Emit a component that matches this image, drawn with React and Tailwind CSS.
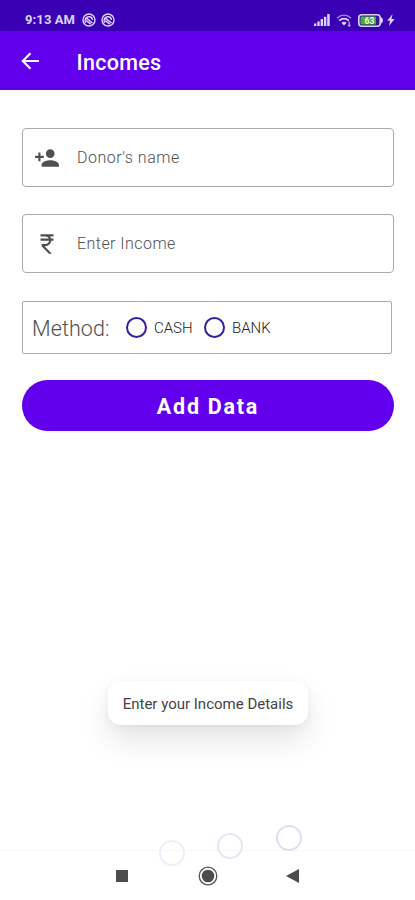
function StatusBar() {
  return (
    <div className="flex h-[31px] items-center justify-between bg-[#3900b4] pt-[9px] pr-[20px] pl-[25px] text-[#ddd2ff]">
      <div className="flex items-center">
        <span className="w-[52px] text-[13px] leading-[14px] font-bold tracking-[0.1px] whitespace-nowrap">9:13 AM</span>
        <Swirl className="ml-[5px]" />
        <Swirl className="ml-[5px]" />
      </div>
      <div className="flex items-center">
        <svg width="16" height="12" viewBox="0 0 16 12" fill="currentColor">
          <path d="M0 9.5h2.4V12H0zM3.3 7.5h2.4V12H3.3zM6.6 5h2.4v7H6.6zM9.9 2.8h2.4V12H9.9zM13.2 0h2.5v12h-2.5z" />
        </svg>
        <svg className="ml-[6px]" width="17" height="14" viewBox="0 0 17 14" fill="none" stroke="currentColor">
          <path d="M1 5.2c4-4 10-4 14 0" strokeWidth="1.3" opacity=".65" />
          <path d="M3.3 7.7c2.8-2.8 6.7-2.8 9.5 0" strokeWidth="1.7" />
          <path d="M5.4 9.8c1.7-1.5 3.6-1.5 5.2 0L8 12.6z" fill="currentColor" stroke="none" />
          <path d="M13.2 8.5v4.8M11.8 12l1.4 1.3 1.4-1.3" strokeWidth="1" />
        </svg>
        <svg className="ml-[5px]" width="26" height="13" viewBox="0 0 26 13">
          <rect x=".8" y=".8" width="21.4" height="11.4" rx="3" fill="#37169a" stroke="#ddd2ff" strokeWidth="1.6" />
          <rect x="2.5" y="2.5" width="15.5" height="8" rx="1" fill="#48ad35" />
          <path d="M23 3.3c2.6 1.2 2.6 5.2 0 6.4z" fill="#ddd2ff" />
          <text x="11.5" y="9.6" textAnchor="middle" fontSize="8.5" fontWeight="700" fill="#edffe7">63</text>
        </svg>
        <svg className="ml-[3px]" width="8" height="12" viewBox="0 0 8 12" fill="currentColor">
          <path d="M5.6 0 .3 6.7h2.8L2 12l5.6-7H4.5z" />
        </svg>
      </div>
    </div>
  );
}

function Swirl({ className }) {
  return (
    <svg className={className} width="14" height="14" viewBox="0 0 14 14" fill="none" stroke="currentColor" strokeWidth="1.4">
      <circle cx="7" cy="7" r="6" />
      <path d="M3.4 9.9C2.2 6.3 4.1 3.8 7 3.8c2 0 3.4 1.3 3.4 3.3M3.7 4.6l6.8 5.4M4.2 7.6l4.7 3.5" />
    </svg>
  );
}

function Field({ icon, className, label, labelClass }) {
  return (
    <div className={`flex h-[59px] w-[372px] items-center rounded-[4px] border border-[#aaa] ${className}`}>
      <div className="flex w-[54px] shrink-0 items-center pl-[11px]">{icon}</div>
      <span className={`text-[16px] leading-[20px] font-light whitespace-nowrap text-[#505050] ${labelClass}`}>{label}</span>
    </div>
  );
}

function Radio({ label, className, labelClass }) {
  return (
    <label className={`flex items-center ${className}`}>
      <span className="size-[21px] shrink-0 rounded-full border-2 border-[#3a1ba5]" />
      <span className={`mt-[1px] ml-[7px] text-[15px] leading-[20px] font-light text-[#222] ${labelClass}`}>{label}</span>
    </label>
  );
}

export default function App() {
  return (
    <div className="relative flex h-[900px] w-[415px] flex-col overflow-hidden bg-white font-[Roboto,sans-serif]">
      <StatusBar />
      <header className="flex h-[59px] items-center bg-[#6200ee] pl-[21px] text-white">
        <svg width="19" height="18" viewBox="0 0 19 18" fill="none" stroke="currentColor" strokeWidth="2.1">
          <path d="M18 9H2M9.5 1.2 1.8 9l7.7 7.8" />
        </svg>
        <h1 className="mt-[4px] ml-[36.5px] text-[21.5px] leading-[26px] font-medium tracking-[0.3px]">Incomes</h1>
      </header>
      <main className="flex flex-1 flex-col pt-[38px] pl-[22px]">
        <Field
          label="Donor's name"
          labelClass="tracking-[0.5px]"
          icon={
            <svg width="26" height="26" viewBox="0 0 24 24" fill="#505050">
              <path d="M15 12c2.21 0 4-1.79 4-4s-1.79-4-4-4-4 1.79-4 4 1.79 4 4 4zm-9-2V7H4v3H1v2h3v3h2v-3h3v-2H6zm9 4c-2.67 0-8 1.34-8 4v2h16v-2c0-2.66-5.33-4-8-4z" />
            </svg>
          }
        />
        <Field
          className="mt-[27px]"
          label="Enter Income"
          labelClass="tracking-[0.45px]"
          icon={
            <svg width="26" height="26" viewBox="0 0 24 24" fill="#505050">
              <path d="M13.66 7c-.56-1.18-1.76-2-3.16-2H6V3h12v2h-3.26c.48.58.84 1.26 1.05 2H18v2h-2.02c-.25 2.8-2.61 5-5.48 5h-.73l6.73 7h-2.77L7 14v-2h3.5c1.76 0 3.22-1.3 3.46-3H6V7h7.66z" />
            </svg>
          }
        />
        <div className="mt-[28px] flex h-[53px] w-[370px] items-center rounded-[2px] border border-[#aaa] pl-[9px]">
          <span className="mt-[2px] w-[94px] text-[21.5px] leading-[26px] font-light tracking-[0.1px] text-[#505050]">Method:</span>
          <Radio label="CASH" className="w-[78px]" />
          <Radio label="BANK" />
        </div>
        <button className="mt-[26px] h-[51px] w-[372px] rounded-full bg-[#6200ee] pt-[4px] text-[21.5px] font-bold tracking-[1.75px] text-white">Add Data</button>
        <div className="mt-[250px] ml-[86px] flex h-[44px] w-[200px] items-center justify-center rounded-[13px] bg-white pt-[2px] text-[15px] whitespace-nowrap text-[#444] shadow-[0_15px_30px_rgba(0,0,0,0.11),0_2px_10px_rgba(0,0,0,0.05)]">
          Enter your Income Details
        </div>
      </main>
      <nav className="flex h-[50px] items-center border-t border-[#f7f7f7] pl-[116px]">
        <span className="size-[12px] bg-[#4c4c4c]" />
        <svg className="ml-[70px]" width="20" height="20" viewBox="0 0 20 20">
          <circle cx="10" cy="10" r="8.8" fill="none" stroke="#555" strokeWidth="1.3" />
          <circle cx="10" cy="10" r="6.3" fill="#4c4c4c" />
        </svg>
        <svg className="ml-[68px]" width="13" height="14" viewBox="0 0 13 14" fill="#4c4c4c">
          <path d="M13 0v14L0 7z" />
        </svg>
      </nav>
      <span className="absolute top-[840px] left-[159px] size-[26px] rounded-full border-2 border-[#f0eef8]" />
      <span className="absolute top-[833px] left-[217px] size-[26px] rounded-full border-2 border-[#e8e4f5]" />
      <span className="absolute top-[825px] left-[276px] size-[26px] rounded-full border-2 border-[#e1ddf3]" />
    </div>
  );
}
